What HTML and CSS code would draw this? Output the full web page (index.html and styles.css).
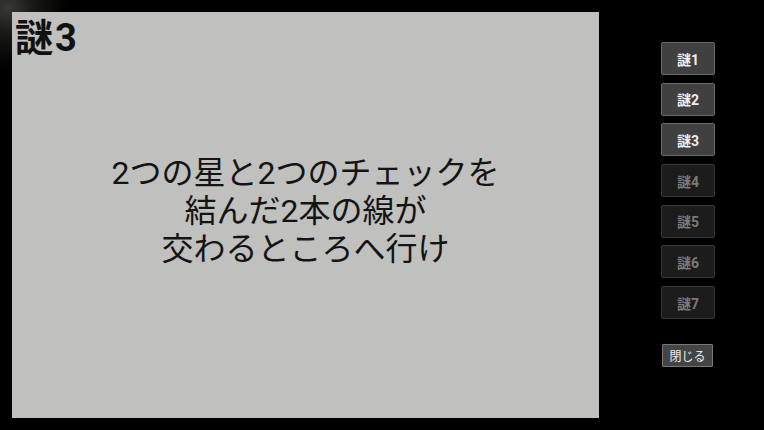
FILE: index.html
```html
<!DOCTYPE html>
<html lang="ja">
<head>
    <meta charset="UTF-8">
    <meta name="viewport" content="width=device-width, initial-scale=1.0">
    <title>謎3</title>
    <link rel="stylesheet" href="styles.css">
</head>
<body>

    <div class="screen">
        <!-- Riddle panel -->
        <div class="panel">
            <h1 class="panel-title">謎3</h1>
            <p class="riddle">2つの星と2つのチェックを<br>結んだ2本の線が<br>交わるところへ行け</p>
        </div>

        <!-- Riddle list -->
        <div class="side">
            <button class="nazo-btn">謎1</button>
            <button class="nazo-btn">謎2</button>
            <button class="nazo-btn">謎3</button>
            <button class="nazo-btn locked">謎4</button>
            <button class="nazo-btn locked">謎5</button>
            <button class="nazo-btn locked">謎6</button>
            <button class="nazo-btn locked">謎7</button>
            <button class="close-btn">閉じる</button>
        </div>
    </div>

</body>
</html>
```

FILE: styles.css
```css
body {
    margin: 0;
    padding: 0;
    background-color: #000;
    font-family: Roboto, "Noto Sans CJK JP", sans-serif;
    overflow: hidden;
}
.screen {
    width: 764px;
    height: 430px;
    display: flex;
    background: radial-gradient(circle at 8px 8px, #3a3a34 0, #151513 28px, #000 60px);
}
.panel {
    margin: 12px 0 0 12px;
    width: 587px;
    height: 406px;
    background-color: #c0c0be;
    display: flex;
    flex-direction: column;
}
.panel-title {
    margin: 1px 0 0 3px;
    font-size: 38px;
    font-weight: bold;
    line-height: 50px;
    letter-spacing: 2px;
    color: #111;
}
.riddle {
    margin: 91px 0 0 0;
    text-align: center;
    font-size: 32px;
    line-height: 38px;
    color: #141414;
}
.side {
    margin-left: 62px;
    padding-top: 42px;
    display: flex;
    flex-direction: column;
    align-items: flex-start;
    gap: 7.7px;
}
.nazo-btn {
    width: 54px;
    height: 33px;
    padding: 0;
    background-color: #404040;
    border: 1px solid #6a6a6a;
    border-radius: 2px;
    color: #eee;
    font-family: Roboto, "Noto Sans CJK JP", sans-serif;
    font-size: 14px;
    font-weight: bold;
}
.nazo-btn.locked {
    background-color: #1c1c1c;
    border-color: #383838;
    color: #7a7a7a;
}
.close-btn {
    margin: 17px 0 0 1px;
    width: 51px;
    height: 23px;
    padding: 0;
    background-color: #444;
    border: 1px solid #777;
    border-radius: 1px;
    color: #eee;
    font-family: Roboto, "Noto Sans CJK JP", sans-serif;
    font-size: 12px;
}
```
